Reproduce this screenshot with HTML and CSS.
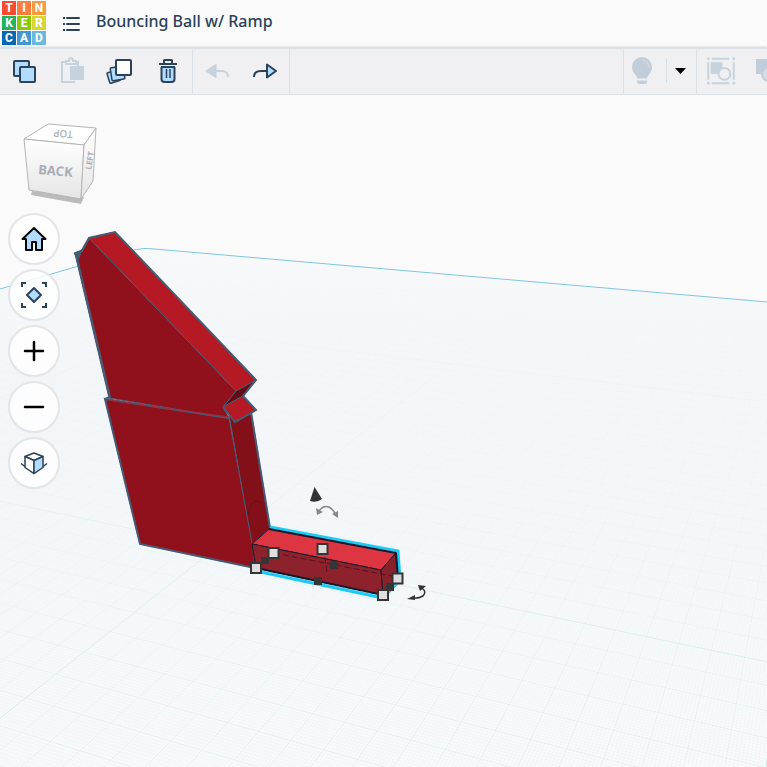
FILE: index.html
```html
<!DOCTYPE html>
<html lang="en">
<head>
<meta charset="utf-8">
<title>Bouncing Ball w/ Ramp</title>
<link rel="stylesheet" href="styles.css">
</head>
<body>
<header class="header">
  <a class="logo" href="#" aria-label="Tinkercad home">
    <span class="tile red">T</span><span class="tile orange">I</span><span class="tile amber">N</span>
    <span class="tile green">K</span><span class="tile lime">E</span><span class="tile yellow">R</span>
    <span class="tile navy">C</span><span class="tile blue">A</span><span class="tile sky">D</span>
  </a>
  <button class="menu" aria-label="Designs">
    <svg width="18" height="16" viewBox="0 0 18 16"><g stroke="#2b4259" stroke-width="2"><path d="M5 2H17M5 8H17M5 14H17" stroke-linecap="round"/><path d="M1 2h2M1 8h2M1 14h2"/></g></svg>
  </button>
  <h1 class="title">Bouncing Ball w/ Ramp</h1>
</header>

<nav class="toolbar" aria-label="Edit tools">
  <div class="group">
    <button class="tool" aria-label="Copy"><svg viewBox="0 0 48 46"><g fill="#b1dcff" stroke="#2b4259" stroke-width="2" stroke-linejoin="round"><rect x="14" y="12" width="15" height="15" rx="1"/><rect x="20" y="18" width="15" height="15" rx="1"/></g></svg></button>
    <button class="tool" aria-label="Paste"><svg viewBox="0 0 48 46"><path d="M20 13H14V33H27M26 13h4v4" fill="none" stroke="#c6d2dc" stroke-width="2"/><rect x="22" y="17" width="14" height="14" rx="1" fill="#c6d2dc"/><path d="M18 15v-3h3a2 3 0 0 1 4 0h3v3z" fill="#f0f0f3" stroke="#c6d2dc" stroke-width="2"/></svg></button>
    <button class="tool" aria-label="Duplicate and repeat"><svg viewBox="0 0 48 46"><g fill="#b1dcff" stroke="#2b4259" stroke-width="1.5" stroke-linejoin="round"><rect x="12" y="22" width="11" height="11" rx="1" transform="rotate(-17 18 27)"/><rect x="15" y="18" width="13" height="13" rx="1" transform="rotate(-9 21 24)"/></g><rect x="20" y="11" width="15" height="15" rx="1" fill="#fff" stroke="#2b4259" stroke-width="2"/></svg></button>
    <button class="tool" aria-label="Delete"><svg viewBox="0 0 48 46"><path d="M17.5 17h13v13q0 3-3 3h-7q-3 0-3-3z" fill="#b1dcff"/><path d="M15 15h18M20 15v-3.500q0-.5.5-.5h7q.5 0 .5.500V15M17.500 18v12q0 3 3 3h7q3 0 3-3V18M17 18h14" fill="none" stroke="#2b4259" stroke-width="2"/><path d="M22.500 20v9M26 20v9" stroke="#2b4259" stroke-width="1.500"/></svg></button>
  </div>
  <div class="group">
    <button class="tool" aria-label="Undo"><svg viewBox="0 0 48 46"><path d="M23 22h5q7 0 7 6" fill="none" stroke="#c6d2dc" stroke-width="2"/><path d="M12 22L23.500 14.500v15z" fill="#c6d2dc"/></svg></button>
    <button class="tool" aria-label="Redo"><svg viewBox="0 0 48 46"><path d="M13 28q0-6 7-6h6" fill="none" stroke="#2b4259" stroke-width="2"/><path d="M26 15.500L35 22l-9 6.500z" fill="#b1dcff" stroke="#2b4259" stroke-width="2" stroke-linejoin="round"/></svg></button>
  </div>
  <div class="group view-tools">
    <button class="bulb" aria-label="Show all"><svg viewBox="0 0 38 46"><path d="M18 8a10 10 0 0 1 10 10c0 6-4 7-5 11.500H13.500C12 25 8 24 8 18A10 10 0 0 1 18 8z" fill="#c1ceda"/><path d="M13 31.500h10v1q0 2.500-3 2.500h-4q-3 0-3-2.500z" fill="#c1ceda"/><path d="M18.500 11q6 1 6 7" stroke="#d8e1e9" fill="none"/></svg></button>
    <span class="rule"></span>
    <button class="caret" aria-label="Visibility options"><svg viewBox="0 0 29 46"><path d="M8 19h11l-5.500 6z" fill="#000"/></svg></button>
    <button class="tool grouping" aria-label="Group"><svg viewBox="0 0 48 46"><path d="M15 9.500h18M15 34.500h18M11.500 13v18M37.500 13v18" stroke="#c6d2dc" stroke-width="2"/><g fill="#c6d2dc"><circle cx="11.500" cy="9.500" r="1.500"/><circle cx="37.500" cy="9.500" r="1.500"/><circle cx="11.500" cy="34.500" r="1.500"/><circle cx="37.500" cy="34.500" r="1.500"/><rect x="14" y="13" width="12" height="12"/></g><circle cx="28" cy="25" r="6" fill="#f0f0f3" stroke="#c6d2dc" stroke-width="2"/></svg></button>
    <button class="tool" aria-label="Ungroup"><svg viewBox="0 0 48 46"><path d="M12 10h14v15H12z" fill="#c1ceda"/><circle cx="25" cy="25" r="7" fill="#d5dee6" stroke="#c1ceda" stroke-width="2"/></svg></button>
  </div>
</nav>

<main class="workspace">
  <svg class="scene" viewBox="0 95 767 672" preserveAspectRatio="xMinYMin slice" role="img" aria-label="Workplane with a red ramp and a selected red box">
    <defs>
      <linearGradient id="floor" x1="0" y1="250" x2="0" y2="767" gradientUnits="userSpaceOnUse"><stop offset="0" stop-color="#f8f9fa"/><stop offset=".25" stop-color="#f5f7f9"/><stop offset="1" stop-color="#f8fafb"/></linearGradient>
      <linearGradient id="fade" x1="0" y1="260" x2="0" y2="767" gradientUnits="userSpaceOnUse"><stop offset="0" stop-color="#fff" stop-opacity=".02"/><stop offset=".4" stop-color="#fff" stop-opacity=".3"/><stop offset="1" stop-color="#fff"/></linearGradient>
      <mask id="depth" maskUnits="userSpaceOnUse" x="0" y="95" width="767" height="672"><rect y="95" width="767" height="672" fill="url(#fade)"/></mask>
      <clipPath id="plane"><path d="M0 289L143 248L767 302V767H0z"/></clipPath>
      <linearGradient id="shade" x1="0" y1="0" x2="0" y2="1"><stop offset="0" stop-color="#fff"/><stop offset="1" stop-color="#e5e5e5"/></linearGradient>
    </defs>
    <rect y="95" width="767" height="672" fill="#fafafb"/>
    <path d="M0 289L143 248L767 302V767H0z" fill="url(#floor)"/>
    <g clip-path="url(#plane)"><g mask="url(#depth)">
      <path id="minor" fill="none" stroke="#6d94b0" stroke-opacity=".03"/>
      <path id="medium" fill="none" stroke="#7cc8d0" stroke-opacity=".14"/>
      <path id="major" fill="none" stroke="#7cc8d0" stroke-opacity=".3"/>
    </g></g>
    <path d="M0 289L130 251Q143 247.500 152 248.800L767 302" fill="none" stroke="#7fc6df"/>

    <g stroke="#465c74" stroke-linejoin="miter">
      <path d="M229 415L251 411L270 528L252 544L256 568z" fill="#831019"/>
      <path d="M105 399L229 418L252 543L255 568L140 544z" fill="#90111b"/>
      <path d="M229 418L105 399L140 544L255 568M251 412L270 528" fill="none" stroke-width="2"/>
      <path d="M75 254L82 252L89 238L236 391L223 407L229 418L109 398z" fill="#90111b"/>
      <path d="M89 238L115 232L256 380L236 391z" fill="#b51923"/>
      <path d="M236 391L256 380L243 396L223 407z" fill="#650c13"/>
      <path d="M223 407L243 396L256 410L235 422z" fill="#b51923"/>
      <path d="M105 399L110 397L76 254L81 252L89 238L115 232L256 380L243 396L256 410L235 422L223 407" fill="none" stroke-width="2"/>
      <path d="M74 253L82 250L78 260z" fill="#465c74"/>
      <path d="M109 400L229 417" fill="none" stroke="#a52a3c"/>
    </g>
    <path d="M248 515Q250 503 256 501Q260 500 263 505" fill="none" stroke="#570f19" stroke-width="1" opacity=".6"/>

    <path d="M270 527L398 551L400 580L383 598L256 571" fill="none" stroke="#1bcaf5" stroke-width="3"/>
    <g stroke="#151a2e" stroke-width="1" stroke-linejoin="round">
      <path d="M269 529L396 553L381 570L252 544z" fill="#dd3542"/>
      <path d="M252 544L381 570L383 595L256 568z" fill="#8d222c"/>
      <path d="M381 570L396 553L398 578L383 595z" fill="#87222a"/>
      <path d="M269 529L396 553L398 578M256 568L383 595" fill="none" stroke-width="2"/>
    </g>
    <path d="M274 553L397 577M325 557L327 573" fill="none" stroke="#5b101c" stroke-dasharray="6 3"/>
    <path d="M262 571L377 595" stroke="#38dcf4" stroke-dasharray="2 4"/>
    <g fill="#353535"><path d="M261 557h8v7h-8zM314 577h8v8h-8zM330 561h8v8h-8zM386 583h8v8h-8z"/></g>
    <g fill="#dedede" stroke="#353535" stroke-width="2"><rect x="268.500" y="548" width="10" height="10"/><rect x="251" y="563" width="10" height="10"/><rect x="317.500" y="544" width="10" height="10"/><rect x="392.500" y="573.500" width="10" height="10"/><rect x="378" y="590" width="10" height="10"/></g>
    <path d="M314.500 487L322 499Q317 503 310 501z" fill="#333"/>
    <g fill="none" stroke="#888" stroke-width="1.500"><path d="M319 511Q323 505 329 507Q334 510 335 514"/><path d="M316 508l1 7 6-3zM338 518v-7l-6 3z" fill="#888" stroke="none"/></g>
    <g fill="none" stroke="#333" stroke-width="1.500"><path d="M422 588Q427 592 423 596Q418 599 412 598"/><path d="M418 585l8 1-6 5zM407 599l8-4v5z" fill="#333" stroke="none"/></g>
  </svg>

  <div class="controls">
    <button class="cube" aria-label="View cube">
      <svg viewBox="0 0 76 84"><path d="M8 74L7 78L57 87L60 80z" fill="#bbb"/><g stroke="#b5b5b5" stroke-linejoin="round"><path d="M0 22L24 7L72 11L60 28z" fill="#fff"/><path d="M0 22L60 28L57 82L5 73z" fill="url(#shade)"/><path d="M60 28L72 11L69 64L57 82z" fill="url(#shade)"/></g>
      <text class="face" x="14" y="57" transform="rotate(5 14 57)">BACK</text><text class="face top" x="49" y="14" transform="rotate(184 49 14)">TOP</text><text class="face side" x="67" y="53" transform="rotate(-80 67 53)">LEFT</text></svg>
    </button>
    <button class="round" aria-label="Home view"><svg viewBox="0 0 28 28"><path d="M14 3L2.500 14H6v11h6v-8h4v8h6V14h3.500z" fill="#b1dcff" stroke="#050505" stroke-width="2" stroke-linejoin="round"/></svg></button>
    <button class="round" aria-label="Fit view"><svg viewBox="0 0 28 28"><path d="M2 6V2h4M22 2h4v4M26 22v4h-4M6 26H2v-4" fill="none" stroke="#2b4259" stroke-width="2"/><path d="M14 7l7 7-7 7-7-7z" fill="#b1dcff" stroke="#2b4259" stroke-width="2" stroke-linejoin="round"/></svg></button>
    <button class="round" aria-label="Zoom in"><svg viewBox="0 0 28 28"><path d="M5 14h18M14 5v18" stroke="#000" stroke-width="2.500" stroke-linecap="round"/></svg></button>
    <button class="round" aria-label="Zoom out"><svg viewBox="0 0 28 28"><path d="M5 14h18" stroke="#000" stroke-width="2.500" stroke-linecap="round"/></svg></button>
    <button class="round" aria-label="Orthographic view"><svg viewBox="0 0 28 28"><g stroke="#2b4259" stroke-width="1.500" stroke-linejoin="round"><path d="M1 14.500L14 24.500L27 14.500" fill="none"/><path d="M14 4l9 3.500-9 4-9-4z" fill="#fff"/><path d="M5 7.500l9 4v13l-9-6z" fill="#fff"/><path d="M23 7.500l-9 4v13l9-6z" fill="#b1dcff"/></g></svg></button>
  </div>
</main>
<script src="grid.js"></script>
</body>
</html>
```
FILE: styles.css
```css
* { box-sizing: border-box; }
html, body { height: 100%; }
body {
  margin: 0;
  display: flex;
  flex-direction: column;
  overflow: hidden;
  background: #fafafb;
  color: #2b4259;
  font-family: "Noto Sans", "Open Sans", sans-serif;
}
button { padding: 0; border: 0; background: none; font-family: inherit; cursor: pointer; }
svg { display: block; }

.header {
  flex: none;
  display: flex;
  align-items: flex-start;
  height: 48px;
  padding: 1px 2px;
  background: #fafafa;
}
.logo {
  display: grid;
  grid-template-columns: repeat(3, 14px);
  grid-auto-rows: 14px;
  gap: 1px;
  text-decoration: none;
}
.tile {
  color: #fff;
  font-family: Roboto, sans-serif;
  font-size: 12px;
  font-weight: 800;
  line-height: 14px;
  text-align: center;
}
.red { background: #fa4b32; }
.orange { background: #ff7e3d; }
.amber { background: #fb9a3c; }
.green { background: #23b35c; }
.lime { background: #8bc808; }
.yellow { background: #d6d62f; }
.navy { background: #0569b4; }
.blue { background: #4297d1; }
.sky { background: #68b8df; }
.menu { margin: 15px 0 0 16px; }
.title {
  margin: 8px 0 0 16px;
  font-size: 16px;
  font-weight: 500;
  line-height: 24px;
  white-space: nowrap;
}

.toolbar {
  position: relative;
  flex: none;
  display: flex;
  height: 47px;
  background: #f0f0f3;
  border-top: 1px solid #dde2e9;
  border-bottom: 1px solid #dce1e7;
  box-shadow: 0 -1px 2px #cbd3de;
}
.group { display: flex; border-right: 1px solid #dce1e8; }
.tool { flex: none; width: 48px; }
.tool svg, .bulb svg, .caret svg { width: 100%; height: 46px; }
.view-tools {
  width: 144px;
  margin-left: auto;
  overflow: hidden;
  border-right: 0;
  border-left: 1px solid #dce1e8;
}
.bulb { flex: none; width: 38px; margin-right: 4px; }
.rule { flex: none; width: 1px; height: 24px; margin-top: 10px; background: #d6dee6; }
.caret { flex: none; width: 29px; }
.grouping { border-left: 1px solid #dce1e8; }

.workspace { position: relative; flex: 1; min-height: 0; }
.scene { position: absolute; inset: 0; width: 100%; height: 100%; }
.controls {
  position: relative;
  display: inline-flex;
  flex-direction: column;
  gap: 4px;
  padding: 22px 8px;
}
.cube { width: 76px; height: 92px; margin: 0 0 0 16px; }
.cube svg { width: 76px; height: 84px; margin-bottom: 8px; overflow: visible; }
.face { fill: #a9adb3; font-size: 13px; font-weight: 700; }
.top { font-size: 10px; font-weight: 500; }
.side { font-size: 8px; }
.round {
  display: grid;
  place-items: center;
  width: 52px;
  height: 52px;
  border: 2px solid #e3e5e8;
  border-radius: 50%;
  background: rgba(255, 255, 255, .8);
}
.round svg { width: 28px; height: 28px; }
```
FILE: grid.js
```js
// Workplane grid: two pencils of lines, each running to its own vanishing point.
const left = { x: -2157, y: 49 };
const right = { x: 857, y: 43 };
const paths = { minor: "", medium: "", major: "" };

function addLine(from, x, y, index, offset) {
  const kind = index % 10 ? "minor" : (index / 10 + offset) % 20 ? "medium" : "major";
  const t = 3;
  const ex = from.x + (x - from.x) * t;
  const ey = from.y + (y - from.y) * t;
  paths[kind] += `M${from.x} ${from.y}L${ex} ${ey}`;
}

for (let i = -160; i <= 390; i++) addLine(left, 1044 + 11.8 * i, 720, i, 0);
for (let i = -550; i <= 80; i++) addLine(right, 603 + 4.1 * i, 760, i, 16);

for (const id in paths) document.getElementById(id).setAttribute("d", paths[id]);
```
